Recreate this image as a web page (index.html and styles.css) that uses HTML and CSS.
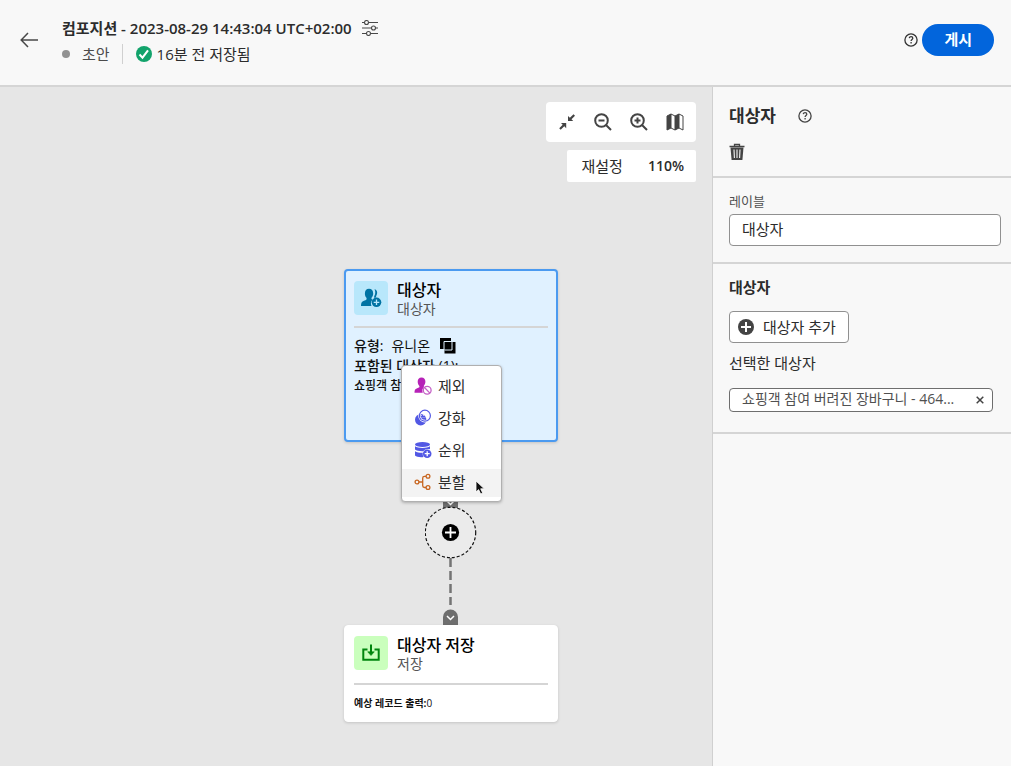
FILE: index.html
```html
<!DOCTYPE html>
<html lang="ko">
<head>
<meta charset="utf-8">
<meta name="viewport" content="width=device-width, initial-scale=1">
<title>컴포지션</title>
<link rel="stylesheet" href="styles.css">
</head>
<body>
<header class="topbar">
  <button class="icon-btn back" aria-label="뒤로">
    <svg width="18" height="16" viewBox="0 0 18 16" fill="none" stroke="#484848" stroke-width="1.5"><path d="M18 8H1.5M8 1 1.2 8 8 15"/></svg>
  </button>
  <div class="heading">
    <div class="title-row">
      <h1 class="title">컴포지션 - 2023-08-29 14:43:04 UTC+02:00</h1>
      <button class="icon-btn" aria-label="속성">
        <svg width="16" height="16" viewBox="0 0 16 16" fill="none" stroke="#484848" stroke-width="1.1"><path d="M0 2.5h2.500M6.500 2.500H16M0 8h9.500M13.500 8H16M0 13.500h4.500M8.500 13.500H16"/><circle cx="4.500" cy="2.500" r="2"/><circle cx="11.500" cy="8" r="2"/><circle cx="6.500" cy="13.500" r="2"/></svg>
      </button>
    </div>
    <div class="status-row">
      <span class="dot"></span>
      <span class="draft">초안</span>
      <span class="saved">
        <svg width="16" height="16" viewBox="0 0 16 16"><circle cx="8" cy="8" r="8" fill="#12a36b"/><path d="m3.500 8.500 3 3.200 5.500-7.400" fill="none" stroke="#fff" stroke-width="2"/></svg>
        16분 전 저장됨
      </span>
    </div>
  </div>
  <button class="icon-btn" aria-label="도움말">
    <svg width="14" height="14" viewBox="0 0 14 14" fill="none" stroke="#333" stroke-width="1.3"><circle cx="7" cy="7" r="6.100"/><path d="M5.200 5.200c.2-1 .9-1.500 1.900-1.500s1.700.6 1.700 1.500c0 1.200-1.700 1.300-1.700 2.800M7.100 9.100v1.500"/></svg>
  </button>
  <button class="publish">게시</button>
</header>

<main class="workspace">
  <section class="canvas">
    <div class="tools">
      <div class="toolbar">
        <button class="icon-btn" aria-label="맞춤">
          <svg width="18" height="18" viewBox="0 0 18 18" fill="#444"><path d="M10 3v5h5.200l-1.700-1.700L17 2.800 15.500 1.200 11.900 4.800zM8.200 15.200v-5.200H3l1.700 1.800-3.500 3.500 1.500 1.500 3.600-3.500z"/></svg>
        </button>
        <button class="icon-btn" aria-label="축소">
          <svg width="18" height="18" viewBox="0 0 18 18" fill="none" stroke="#444" stroke-width="2"><circle cx="7.500" cy="7.500" r="6.300"/><path d="m12 12 5 5M4.500 7.500h6"/></svg>
        </button>
        <button class="icon-btn" aria-label="확대">
          <svg width="18" height="18" viewBox="0 0 18 18" fill="none" stroke="#444" stroke-width="2"><circle cx="7.500" cy="7.500" r="6.300"/><path d="m12 12 5 5M4.500 7.500h6M7.500 4.500v6"/></svg>
        </button>
        <button class="icon-btn" aria-label="지도">
          <svg width="18" height="18" viewBox="0 0 18 18"><path d="m1 3 4-2v14l-4 2zM9 3l4-2v14l-4 2z" fill="#444" stroke="#444"/><path d="m5 1 4 2v14l-4-2zM13 1l4 2v14l-4-2z" fill="#fff" stroke="#444"/></svg>
        </button>
      </div>
      <div class="zoom-level">
        <button class="reset">재설정</button>
        <strong>110%</strong>
      </div>
    </div>

    <article class="node node-audience">
      <div class="node-head">
        <span class="node-icon">
          <svg width="22" height="20" viewBox="0 0 22 20" fill="#0073a3"><path d="M14.500 1.200c2.500.2 3.700 3.600 1.700 6.700-.3.500-.2 1 .2 1.300l-2 .8c-.4-.7-.4-1.500 0-2.200 1.200-2.200 1.100-4.600.1-6.600z"/><path d="M9 .800c2.700 0 4.200 2.100 4.200 4.600 0 1.700-.6 3.100-1.500 4.100-.4.500-.3 1.400.2 1.700l.7.300a6 6 0 0 0-1.100 6.500H1c0-3 .6-4.300 3-5.200l2-.9c.8-.3.8-1.800.2-2.400C5.300 8.500 4.900 7 4.900 5.400 4.900 2.900 6.300.8 9 .8z"/><circle cx="16.500" cy="14.300" r="4.800"/><path d="M16.500 11.500v5.600M13.700 14.300h5.600" stroke="#b8e7fb" stroke-width="1.300"/></svg>
        </span>
        <div class="node-names">
          <h2>대상자</h2>
          <p>대상자</p>
        </div>
      </div>
      <div class="node-body">
        <p class="type-line"><b>유형:</b> <span>유니온</span>
          <svg width="16" height="16" viewBox="0 0 16 16"><path d="M0 0h11v4h4.500v11.500H4.500V11H0z" fill="#000"/><path d="M11.500 3.500H4v8M4.500 12h7.500V4" fill="none" stroke="#e0f1ff" stroke-width="1"/></svg>
        </p>
        <p><b>포함된 대상자 (1):</b></p>
        <p class="small">쇼핑객 참여</p>
      </div>
    </article>

    <svg class="connector" width="52" height="128" viewBox="0 0 52 128" fill="none">
      <path d="M18 0h15v11H18z" fill="#6e6e6e"/>
      <path d="m22 4 3.500 3.500L29 4" stroke="#fff" stroke-width="1.500"/>
      <circle cx="25.500" cy="35.500" r="25.200" fill="#ebebeb" stroke="#111" stroke-width="1.200" stroke-dasharray="3 2"/>
      <circle cx="25.500" cy="35.500" r="8.600" fill="#000"/>
      <path d="M25.500 30v11M20 35.500h11" stroke="#fff" stroke-width="1.800"/>
      <path d="M25.500 61v47" stroke="#747474" stroke-width="2.500" stroke-dasharray="9 4"/>
      <path d="M18 128v-8a7.500 7.500 0 0 1 15 0v8z" fill="#6e6e6e"/>
      <path d="m22 119 3.500 3.500L29 119" stroke="#fff" stroke-width="1.500"/>
    </svg>

    <article class="node node-save">
      <div class="node-head">
        <span class="node-icon">
          <svg width="20" height="20" viewBox="0 0 20 20" fill="none" stroke="#00850e" stroke-width="2"><path d="M6.500 6.500H2.300v10.200h15.400V6.500h-4.200"/><path d="M10 1.500v9"/><path d="m6.700 8.800 3.300 3.700 3.300-3.700z" fill="#00850e" stroke-width=".6"/></svg>
        </span>
        <div class="node-names">
          <h2>대상자 저장</h2>
          <p>저장</p>
        </div>
      </div>
      <div class="node-body">
        <p class="tiny"><b>예상 레코드 출력:</b>0</p>
      </div>
    </article>

    <div class="menu" role="menu">
      <button class="menu-item" role="menuitem">
        <svg width="18" height="18" viewBox="0 0 18 18" fill="#b622b7"><path d="M7.500.500c2.600 0 3.900 1.800 3.900 4.200 0 1.500-.6 2.900-1.400 3.800-.4.500-.3 1.100.1 1.600-1.800 1.300-2.100 3.700-1.300 5.700H.500c0-2.500.4-3.900 2.700-4.600l1.700-.7c.8-.3.7-1.500.1-2.100-.8-.9-1.300-2.200-1.300-3.700C3.700 2.300 5 .500 7.500.500z"/><circle cx="13.200" cy="13.300" r="3.900" fill="none" stroke="#c45fc5" stroke-width="1.300"/><path d="m10.500 10.500 5.400 5.600" stroke="#c45fc5" stroke-width="1.300"/></svg>
        제외
      </button>
      <button class="menu-item" role="menuitem">
        <svg width="18" height="18" viewBox="0 0 18 18"><circle cx="6.700" cy="10.700" r="5.700" fill="#5258e4"/><circle cx="10.900" cy="6.700" r="5.500" fill="none" stroke="#fff" stroke-width="2.400"/><circle cx="10.900" cy="6.700" r="5.500" fill="none" stroke="#5258e4" stroke-width="1.200"/><g stroke="#fff" stroke-width=".6" stroke-dasharray="1 1"><path d="M7 6.500h5M6.500 8.500h5.500M7.500 10.500h4"/></g></svg>
        강화
      </button>
      <button class="menu-item" role="menuitem">
        <svg width="18" height="18" viewBox="0 0 18 18" fill="#5258e4"><ellipse cx="8.500" cy="3.500" rx="7.500" ry="2.500"/><path d="M1 5.300c3 2.200 12 2.200 15 0v3c-1.900-.8-5.200-.5-6.700 1.900C6 10.400 2.500 9.800 1 8.500zM1 10.300c2 1.300 5 1.600 7.800 1.500-.3 1.500 0 3 .9 4.200C6 16.500 2.500 16 1 14.500z"/><circle cx="13.200" cy="12.700" r="4.300"/><path d="M13.200 10.200v5M10.700 12.700h5" stroke="#fff" stroke-width="1.300"/></svg>
        순위
      </button>
      <button class="menu-item is-active" role="menuitem">
        <svg width="18" height="18" viewBox="0 0 18 18" fill="none" stroke="#c86620" stroke-width="1.300"><circle cx="3" cy="9" r="1.900"/><circle cx="14" cy="3.300" r="1.900"/><circle cx="14" cy="14.500" r="1.900"/><path d="M5 9h3.700M12 3.300h-1.500c-1.200 0-1.800.6-1.800 1.800v7.600c0 1.200.6 1.800 1.800 1.800H12"/></svg>
        분할
      </button>
    </div>
    <svg class="pointer" width="11" height="16" viewBox="0 0 11 16"><path d="M1 1v11l2.600-2.400L5.700 14l2-.9-2-4.300h3.600z" fill="#111" stroke="#fff" stroke-width=".8"/></svg>
  </section>

  <aside class="panel">
    <section class="panel-head">
      <div class="panel-title">
        <h2>대상자</h2>
        <button class="icon-btn" aria-label="도움말">
          <svg width="14" height="14" viewBox="0 0 14 14" fill="none" stroke="#444" stroke-width="1.300"><circle cx="7" cy="7" r="6.100"/><path d="M5.200 5.200c.2-1 .9-1.500 1.900-1.500s1.700.6 1.700 1.500c0 1.200-1.700 1.300-1.700 2.800M7.100 9.100v1.500"/></svg>
        </button>
      </div>
      <button class="icon-btn" aria-label="삭제">
        <svg width="16" height="18" viewBox="0 0 16 18"><path d="M5.500 3V1.500h5V3M.5 3.500h15" fill="none" stroke="#444" stroke-width="1.300"/><path d="M1.500 4.500h13L13.400 17H2.600z" fill="#444"/><path d="m5 6.500.4 8.500M8 6.500V15M11 6.500l-.4 8.500" stroke="#f8f8f8" stroke-width="1.100"/></svg>
      </button>
    </section>
    <section class="panel-field">
      <label for="label-input">레이블</label>
      <input id="label-input" type="text" value="대상자">
    </section>
    <section class="panel-audience">
      <h3>대상자</h3>
      <button class="add">
        <svg width="16" height="16" viewBox="0 0 16 16"><circle cx="8" cy="8" r="8" fill="#444"/><path d="M8 3v10M3 8h10" stroke="#fff" stroke-width="2"/></svg>
        대상자 추가
      </button>
      <p class="selected">선택한 대상자</p>
      <div class="tag">
        <span>쇼핑객 참여 버려진 장바구니 - 464...</span>
        <button class="icon-btn" aria-label="제거">
          <svg width="8" height="8" viewBox="0 0 8 8" stroke="#444" stroke-width="1.500"><path d="m.700.700 6.600 6.600M7.300.700.700 7.300"/></svg>
        </button>
      </div>
    </section>
  </aside>
</main>
</body>
</html>
```

FILE: styles.css
```css
* {
  box-sizing: border-box;
}

body {
  margin: 0;
  min-height: 100vh;
  display: flex;
  flex-direction: column;
  background: #f8f8f8;
  color: #2c2c2c;
  font: 15px/20px "Open Sans", "Noto Sans CJK KR", sans-serif;
}

h1, h2, h3, p {
  margin: 0;
}

button {
  margin: 0;
  font: inherit;
  color: inherit;
  cursor: pointer;
}

svg {
  display: block;
  flex: none;
}

.icon-btn {
  display: flex;
  padding: 0;
  border: 0;
  background: none;
}

/* Top bar */

.topbar {
  display: flex;
  align-items: center;
  gap: 4px;
  padding: 17px 17px 18px 20px;
  border-bottom: 2px solid #d5d5d5;
}

.back {
  margin: 0 20px 5px 0;
}

.heading {
  flex: 1;
}

.title-row {
  display: flex;
  align-items: center;
  gap: 10px;
  height: 22px;
}

.title {
  font-size: 15px;
  line-height: 20px;
  font-weight: 600;
}

.status-row {
  display: flex;
  align-items: center;
  height: 26px;
  margin-top: 2px;
}

.dot {
  width: 8px;
  height: 8px;
  border-radius: 50%;
  background: #929292;
}

.draft {
  margin-left: 12px;
  padding-right: 12px;
  border-right: 1px solid #d0d0d0;
  color: #4b4b4b;
}

.saved {
  display: flex;
  align-items: center;
  gap: 5px;
  margin-left: 13px;
}

.topbar > .icon-btn:not(.back),
.publish {
  margin-bottom: 4px;
}

.publish {
  height: 32px;
  padding: 0 22px 2px;
  border: 0;
  border-radius: 16px;
  background: #0265dc;
  color: #fff;
  font-weight: 700;
}

/* Workspace */

.workspace {
  flex: 1;
  display: flex;
}

.canvas {
  position: relative;
  flex: 1;
  background: #e6e6e6;
}

.tools {
  display: flex;
  flex-direction: column;
  align-items: flex-end;
  gap: 8px;
  padding: 15px 16px;
}

.toolbar {
  display: flex;
  align-items: center;
  gap: 18px;
  height: 40px;
  padding: 0 12px;
  border-radius: 4px;
  background: #fff;
}

.zoom-level {
  display: flex;
  align-items: center;
  gap: 25px;
  height: 32px;
  padding: 0 12px 0 14px;
  border-radius: 2px;
  background: #fff;
  font-size: 14px;
}

.zoom-level strong {
  font-weight: 600;
}

.reset {
  padding: 0;
  border: 0;
  background: none;
  font-size: 15px;
}

/* Diagram nodes */

.node {
  position: absolute;
  left: 344px;
  width: 214px;
  padding: 10px 9px;
  border: 1px solid #fff;
  border-radius: 4px;
  background: #fff;
  box-shadow: 0 1px 3px #00000026;
}

.node-audience {
  top: 182px;
  height: 173px;
  border: 2px solid #4b9af0;
  padding: 10px 8px;
  background: #e0f1ff;
}

.node-save {
  top: 538px;
  height: 97px;
}

.node-head {
  display: flex;
  gap: 9px;
  height: 47px;
  border-bottom: 2px solid #d5d5d5;
}

.node-icon {
  display: flex;
  align-items: center;
  justify-content: center;
  width: 34px;
  height: 34px;
  border-radius: 4px;
  background: #b8e7fb;
}

.node-save .node-icon {
  background: #caffbd;
}

.node-save .node-head {
  height: 49px;
}

.node-names h2 {
  font-size: 16px;
  line-height: 18px;
  font-weight: 500;
  color: #000;
}

.node-names p {
  font-size: 14px;
  line-height: 20px;
  color: #555;
}

.node-body {
  padding-top: 8px;
  font-size: 14px;
  color: #111;
}

.node-body b {
  font-weight: 500;
}

.type-line {
  display: flex;
  align-items: center;
  gap: 8px;
}

.type-line svg {
  margin-left: 2px;
}

.small {
  font-size: 12px;
  font-weight: 500;
}

.tiny {
  font-size: 10px;
}

.node-body .tiny b {
  font-weight: 700;
}

.connector {
  position: absolute;
  left: 425px;
  top: 410px;
}

/* Context menu */

.menu {
  position: absolute;
  left: 401px;
  top: 278px;
  display: grid;
  gap: 4px;
  width: 101px;
  padding: 7px 0 4px;
  border: 1px solid #b0b0b0;
  border-radius: 4px;
  background: #fff;
  box-shadow: 0 1px 3px #00000040;
}

.menu-item {
  display: flex;
  align-items: center;
  gap: 6px;
  height: 28px;
  padding: 0 12px 3px;
  border: 0;
  background: none;
}

.menu-item.is-active {
  background: #f3f3f3;
}

.pointer {
  position: absolute;
  left: 475px;
  top: 393px;
}

/* Side panel */

.panel {
  flex: 0 0 299px;
  border-left: 1px solid #d0d0d0;
}

.panel section {
  padding-left: 16px;
  border-bottom: 2px solid #d5d5d5;
}

.panel-head {
  height: 91px;
  padding-top: 18px;
}

.panel-title {
  display: flex;
  align-items: center;
  gap: 22px;
  margin-bottom: 16px;
}

.panel-title h2 {
  font-size: 17px;
  line-height: 22px;
  font-weight: 600;
}

.panel .panel-field {
  padding: 13px 10px 16px 16px;
}

.panel-field label {
  display: block;
  margin-bottom: 3px;
  font-size: 13px;
  color: #505050;
}

.panel-field input {
  display: block;
  width: 100%;
  height: 32px;
  padding: 0 12px 3px;
  border: 1px solid #909090;
  border-radius: 4px;
  background: #fff;
  color: inherit;
  font: inherit;
}

.panel .panel-audience {
  padding: 13px 18px 20px 16px;
}

.panel-audience h3 {
  font-size: 15px;
  line-height: 20px;
  font-weight: 600;
}

.add {
  display: flex;
  align-items: center;
  gap: 9px;
  height: 32px;
  margin-top: 14px;
  padding: 0 12px 0 8px;
  border: 1px solid #909090;
  border-radius: 4px;
  background: #fff;
}

.selected {
  margin: 10px 0 15px;
}

.tag {
  display: flex;
  align-items: center;
  justify-content: space-between;
  height: 24px;
  padding: 0 8px 0 12px;
  border: 1px solid #6e6e6e;
  border-radius: 4px;
  background: #fff;
  font-size: 14px;
  color: #505050;
  white-space: nowrap;
}

.tag span {
  padding-bottom: 2px;
}
```
